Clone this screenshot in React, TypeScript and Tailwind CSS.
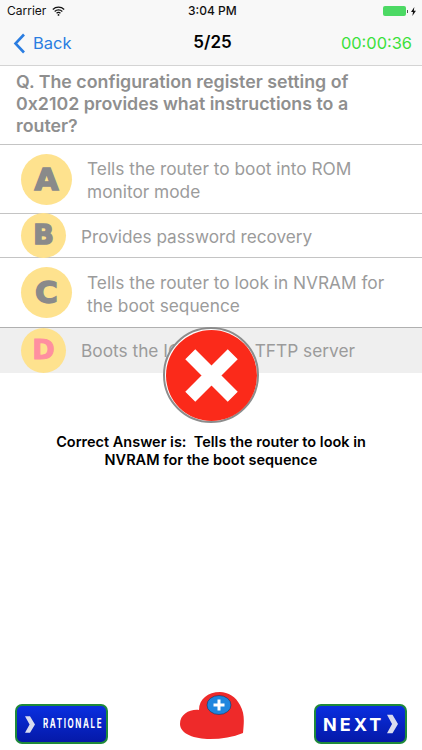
import React from "react";

const font = { fontFamily: "Inter, 'Liberation Sans', sans-serif" };

function Letter({ ch, size, color }: { ch: string; size: "lg" | "sm"; color?: string }) {
  return (
    <div
      className={
        "flex shrink-0 items-center justify-center rounded-full bg-[#fee28e] font-[DejaVu_Sans] font-bold " +
        (size === "lg" ? "h-[51px] w-[51px] text-[31px]" : "h-[45px] w-[45px] text-[27px]")
      }
    >
      <span
        className={
          color
            ? "text-[#ff8fa0] [-webkit-text-stroke:1px_#ff8fa0]"
            : "text-[#8a8a8a] [-webkit-text-stroke:1.5px_#8a8a8a]"
        }
      >
        {ch}
      </span>
    </div>
  );
}

function Chevron({ className }: { className: string }) {
  return (
    <svg viewBox="0 0 12 22" className={className}>
      <path d="M0 1h6l6 10-6 10H0l5.500-10z" fill="#d9dcef" />
    </svg>
  );
}

export default function App() {
  return (
    <div className="relative flex h-[750px] w-[422px] flex-col overflow-hidden bg-white" style={font}>
      {/* header */}
      <div className="h-[66px] shrink-0 border-b border-[#d4d4d4] bg-[#f8f8f8]">
        <div className="flex h-[21px] items-center px-[6px] pt-[1px] text-[12px] text-[#111]">
          <span className="w-[40px] pl-[1px]">Carrier</span>
          <svg viewBox="0 0 16 12" className="ml-[6px] h-[10px] w-[13px]">
            <path d="M1 4.200a10 10 0 0 1 14 0M3.300 6.600a6.800 6.800 0 0 1 9.400 0M5.600 8.800a3.400 3.400 0 0 1 4.800 0" fill="none" stroke="#111" strokeWidth="1.5" />
            <circle cx="8" cy="10.800" r="1.100" fill="#111" />
          </svg>
          <span className="ml-[123px] w-[60px] font-medium">3:04 PM</span>
          <div className="ml-auto flex items-center">
            <div className="h-[10px] w-[23px] rounded-[2px] bg-[#4cd964]" />
            <div className="ml-[1px] h-[3px] w-[1px] bg-[#555]" />
            <svg viewBox="0 0 6 11" className="ml-[3px] h-[9px] w-[5px]">
              <path d="M4 0L0 6h2.400L1.600 11 6 4.600H3.400z" fill="#111" />
            </svg>
          </div>
        </div>
        <div className="flex h-[44px] items-center justify-between pl-[13px] pr-[10px]">
          <div className="flex w-[110px] items-center text-[#2a7de1]">
            <svg viewBox="0 0 13 21" className="h-[21px] w-[13px]">
              <path d="M11 1.500L2.500 10.500L11 19.500" fill="none" stroke="#2a7de1" strokeWidth="2.6" />
            </svg>
            <span className="ml-[7px] text-[16.5px]">Back</span>
          </div>
          <span className="text-[17px] font-semibold text-black">5/25</span>
          <span className="w-[110px] text-right text-[16.4px] text-[#3be03b]">00:00:36</span>
        </div>
      </div>

      {/* question */}
      <div className="h-[79px] shrink-0 border-b border-[#c4c4c4] pl-[16px] pr-[20px] pt-[5px] text-[17.8px] font-semibold leading-[22px] text-[#8f8f8f]">
        Q. The configuration register setting of 0x2102 provides what instructions to a router?
      </div>

      {/* options */}
      <div className="flex h-[69px] shrink-0 items-center border-b border-[#c4c4c4] pl-[21px] pr-[20px] text-[17.3px] leading-[23px] text-[#9b9b9b]">
        <Letter ch="A" size="lg" />
        <span className="ml-[15px] pt-[2px]">Tells the router to boot into ROM monitor mode</span>
      </div>
      <div className="flex h-[44px] shrink-0 items-center border-b border-[#c4c4c4] pl-[21px] pr-[20px] text-[17.2px] text-[#9b9b9b]">
        <Letter ch="B" size="sm" />
        <span className="ml-[15px] pt-[2px]">Provides password recovery</span>
      </div>
      <div className="flex h-[70px] shrink-0 items-center border-b border-[#b0b0b0] pl-[21px] pr-[20px] text-[17.3px] leading-[23px] text-[#9b9b9b]">
        <Letter ch="C" size="lg" />
        <span className="ml-[15px] pt-[2px]">Tells the router to look in NVRAM for the boot sequence</span>
      </div>
      <div className="flex h-[45px] shrink-0 items-center bg-[#efefef] pl-[21px] pr-[20px] text-[17.3px] text-[#9b9b9b]">
        <Letter ch="D" size="sm" color="pink" />
        <span className="ml-[15px]">Boots the IOS from a TFTP server</span>
      </div>

      {/* result text */}
      <div className="mt-[60px] px-[40px] text-center text-[14.5px] font-semibold leading-[18px] text-black">
        Correct Answer is:&nbsp; Tells the router to look in NVRAM for the boot sequence
      </div>

      {/* footer */}
      <div className="mt-auto flex items-end justify-between px-[15px] pb-[6px]">
        <div className="flex h-[40px] w-[93px] items-center rounded-[7px] border-2 border-[#1f8a3a] bg-gradient-to-b from-[#0a2fe0] to-[#0519a8] pl-[8px]">
          <Chevron className="h-[19px] w-[10px] shrink-0" />
          <span className="ml-[8px] w-[60px] origin-left scale-x-[0.64] whitespace-nowrap text-[12.5px] font-bold tracking-[2.5px] text-white">
            RATIONALE
          </span>
        </div>
        <svg viewBox="0 0 64 47" className="mb-[5px] ml-[1px] h-[47px] w-[64px]">
          <path d="M63 41C64 30 65 22 60 13C56 5 48 0 40 0C28 0 19 7 19 18C10 17 0 22 0 32C0 42 15 47 30 47C42 47 53 45 63 41Z" fill="#ee2a2a" />
          <ellipse cx="39" cy="13" rx="12" ry="9.500" fill="#1f86de" stroke="#17335c" strokeWidth="0.6" />
          <path d="M39 7.500v11M33.500 13h11" stroke="#fff" strokeWidth="3" />
        </svg>
        <div className="flex h-[40px] w-[93px] items-center rounded-[7px] border-2 border-[#1f8a3a] bg-gradient-to-b from-[#0a2fe0] to-[#0519a8] pl-[7px]">
          <span className="w-[64px] text-[18px] font-bold tracking-[3px] text-white">NEXT</span>
          <Chevron className="h-[22px] w-[11px] shrink-0" />
        </div>
      </div>

      {/* error overlay */}
      <div className="absolute left-[163px] top-[327px] flex h-[96px] w-[96px] items-center justify-center rounded-full border-2 border-[#8c8c8c] bg-white">
        <svg viewBox="0 0 90 90" className="h-[91px] w-[91px]">
          <circle cx="45" cy="45" r="45" fill="#fb2a1a" />
          <path d="M24 24L66 66M66 24L24 66" stroke="#fff" strokeWidth="14" />
        </svg>
      </div>
    </div>
  );
}
